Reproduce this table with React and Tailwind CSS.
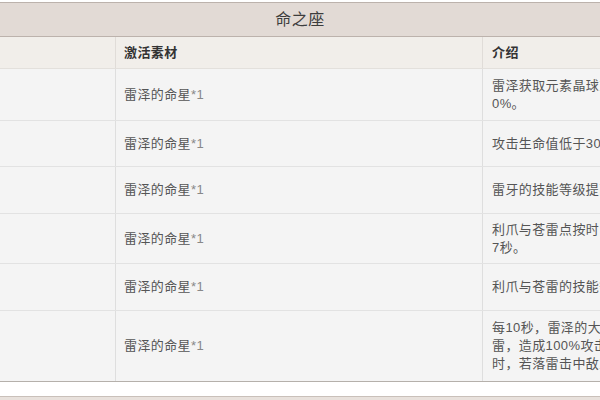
const rows = [
  { h: "h-[52px]", lines: ["雷泽获取元素晶球或元素微粒后，造成的伤害提高1", "0%。"] },
  { h: "h-[46px]", lines: ["攻击生命值低于30%的敌人时，暴击率提高10%。"] },
  { h: "h-[47px]", lines: ["雷牙的技能等级提高3级。至多提升至15级。"] },
  { h: "h-[50px]", lines: ["利爪与苍雷点按时，会使敌人的防御力降低15%，持续", "7秒。"] },
  { h: "h-[47px]", lines: ["利爪与苍雷的技能等级提高3级。至多提升至15级。"] },
  { h: "h-[70px]", lines: ["每10秒，雷泽的大剑会充能，在下一次普通攻击命中时释放落", "雷，造成100%攻击力的雷元素伤害。不处于雷牙状态下", "时，若落雷击中敌人，会为雷泽恢复能量。"] },
];

const App = () => {
  return (
    <div className="w-[600px] h-[400px] overflow-hidden bg-white pt-[2px] font-['Liberation_Sans','Noto_Sans_CJK_SC',sans-serif]">
      {/* Title */}
      <div className="h-[35px] border-y border-[#bcb2ac] bg-[#e2dad5] flex items-center justify-center text-[16px] text-[#3d3d3d] tracking-[0.5px]">
        命之座
      </div>

      {/* Column headers */}
      <div className="grid grid-cols-[116px_367px_1fr] h-[32px] bg-[#f1eeea] border-b border-[#e3e0dc] text-[13px] font-bold text-[#333] tracking-[0.4px]">
        <div className="border-r border-[#e0dcd8]"></div>
        <div className="border-r border-[#e0dcd8] flex items-center pl-[8px]">激活素材</div>
        <div className="flex items-center pl-[9px]">介绍</div>
      </div>

      {/* Body */}
      <div className="bg-[#f4f4f4] text-[13px] text-[#555] tracking-[0.4px] border-b border-[#b5b0ab]">
        {rows.map((row, i) => (
          <div
            key={i}
            className={`grid grid-cols-[116px_367px_1fr] ${row.h} ${i < rows.length - 1 ? "border-b border-[#e2e2e2]" : ""}`}
          >
            <div className="border-r border-[#dedede]"></div>
            <div className="border-r border-[#dedede] flex items-center pl-[8px] whitespace-nowrap">
              雷泽的命星<span className="text-[#888]">*1</span>
            </div>
            <div className="flex flex-col justify-center pl-[9px] leading-[18px] whitespace-nowrap overflow-hidden">
              {row.lines.map((l, j) => (
                <span key={j}>{l}</span>
              ))}
            </div>
          </div>
        ))}
      </div>

      {/* Next section */}
      <div className="mt-[14px] h-[20px] border-t border-[#c9c0ba] bg-[#e8e1dc]"></div>
    </div>
  );
};

export default App;
